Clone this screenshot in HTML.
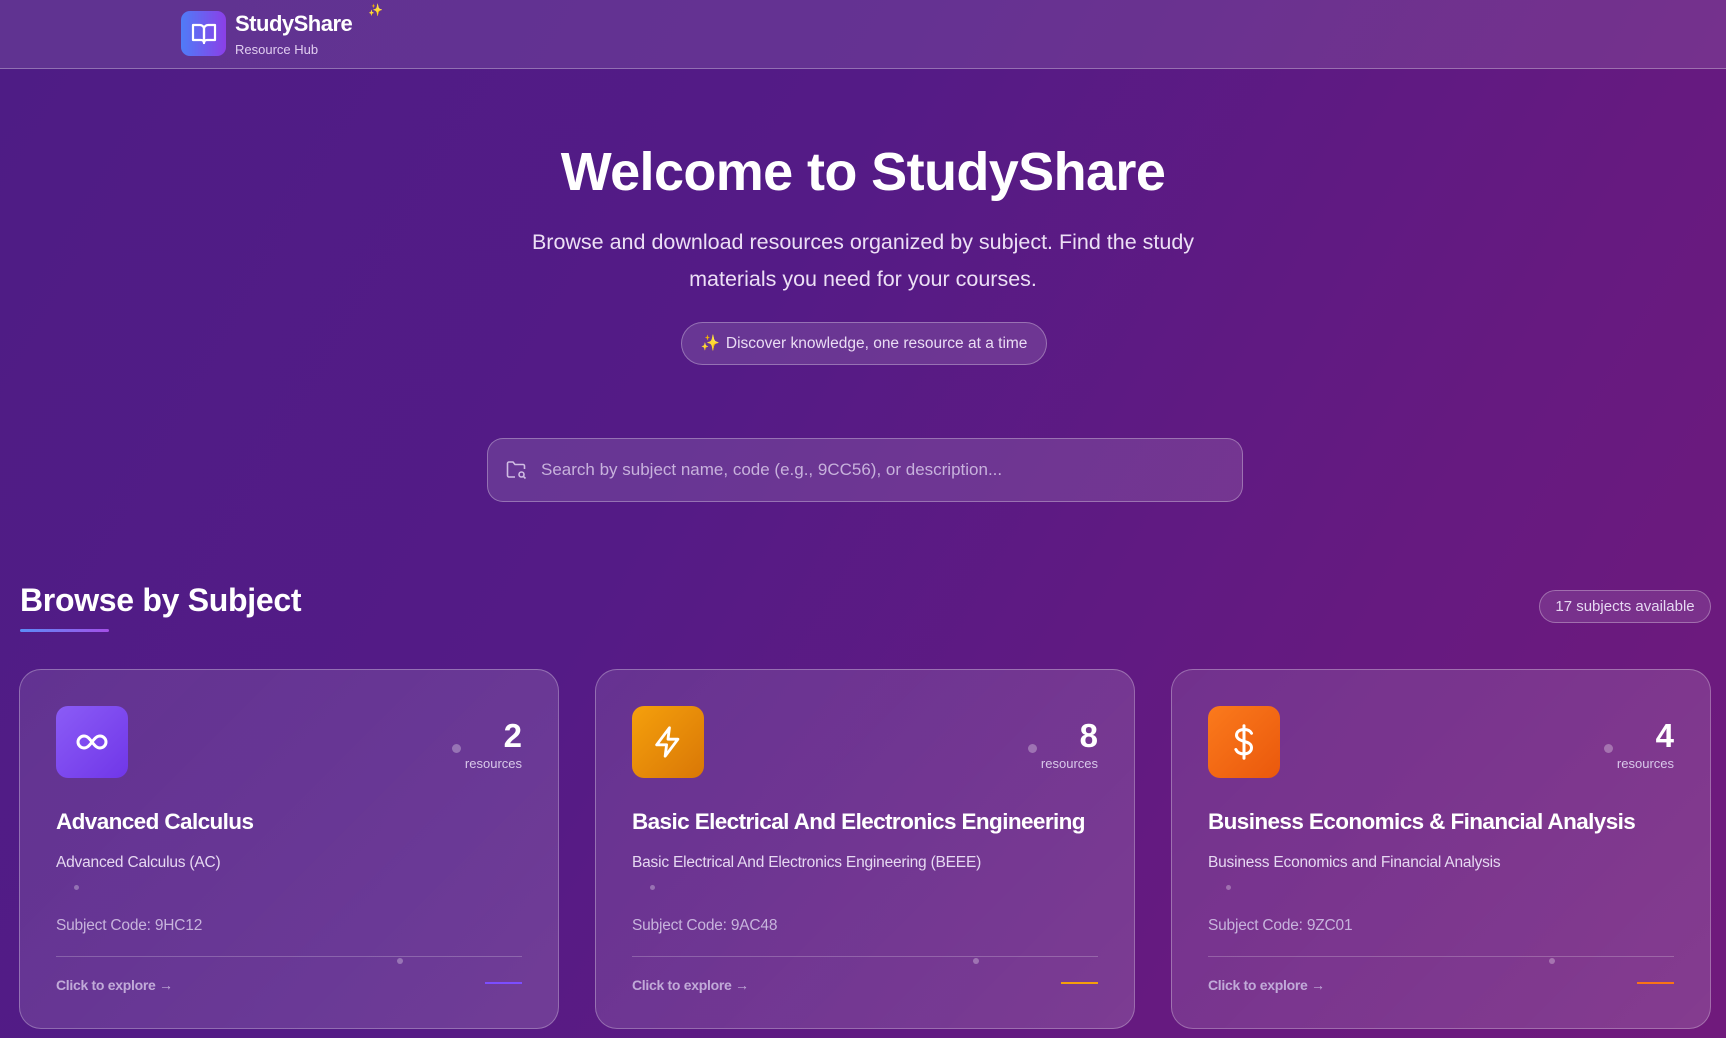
<!DOCTYPE html>
<html><head><meta charset="utf-8"><style>
*{margin:0;padding:0;box-sizing:border-box}
html,body{width:1726px;height:1038px;overflow:hidden}
body{font-family:"Liberation Sans",sans-serif;color:#fff;background:linear-gradient(120deg,#4e1c85 0%,#541b86 40%,#661a80 75%,#701a7c 100%);position:relative}
.hdr{position:absolute;left:0;top:0;width:1726px;height:69px;background:rgba(255,255,255,0.1);border-bottom:1px solid rgba(255,255,255,0.3)}
.logo{position:absolute;left:181px;top:11px;width:45px;height:45px;border-radius:9px;background:linear-gradient(90deg,#4f7cf7,#8b3fe8);display:flex;align-items:center;justify-content:center}
.brand{position:absolute;left:235px;top:11px;font-weight:bold;font-size:22px;letter-spacing:-0.5px}
.sub{position:absolute;left:235px;top:42px;font-size:13px;color:#e0cdf0}
.spark{position:absolute;left:368px;top:3px;color:#d4a05a;font-size:12px}
h1{position:absolute;top:141px;width:100%;text-align:center;font-size:54px;font-weight:bold;letter-spacing:-0.6px}
.lead{position:absolute;top:224px;width:100%;text-align:center;font-size:21.5px;line-height:37px;color:#ecdff5}
.pill{position:absolute;left:681px;top:322px;width:366px;height:43px;border-radius:22px;background:rgba(255,255,255,0.12);border:1px solid rgba(255,255,255,0.3);font-size:15.5px;color:#eadcf4;display:flex;align-items:center;justify-content:center;gap:6px}
.search{position:absolute;left:487px;top:438px;width:756px;height:64px;border-radius:16px;background:rgba(255,255,255,0.12);border:1px solid rgba(255,255,255,0.3);display:flex;align-items:center;padding-left:18px;font-size:17px;color:#c7b1dc}
.search svg{margin-right:13px}
h2{position:absolute;left:20px;top:582px;font-size:32px;font-weight:bold;letter-spacing:-0.3px}
.ul{position:absolute;left:20px;top:629px;width:89px;height:3px;border-radius:2px;background:linear-gradient(90deg,#5b8df7,#a44fe8)}
.badge{position:absolute;left:1539px;top:590px;width:172px;height:33px;border-radius:17px;background:rgba(255,255,255,0.1);border:1px solid rgba(255,255,255,0.3);font-size:15px;color:#e6d8f2;display:flex;align-items:center;justify-content:center}
.card{position:absolute;top:669px;width:540px;height:360px;border-radius:22px;background:linear-gradient(135deg,rgba(255,255,255,0.1),rgba(255,255,255,0.15));border:1px solid rgba(255,255,255,0.28)}
.ic{position:absolute;left:36px;top:36px;width:72px;height:72px;border-radius:12px;display:flex;align-items:center;justify-content:center}
.num{position:absolute;right:36px;top:47px;font-size:33px;font-weight:bold}
.res{position:absolute;right:36px;top:86px;font-size:13px;color:#d9c8ea}
.dot{position:absolute;border-radius:50%;background:rgba(255,255,255,0.3)}
.t{position:absolute;left:36px;top:139px;font-size:22.5px;font-weight:bold;letter-spacing:-0.6px}
.d{position:absolute;left:36px;top:184px;font-size:15.5px;color:#e6d8f2;letter-spacing:-0.2px}
.c{position:absolute;left:36px;top:247px;font-size:15.5px;color:#c7b3dc;letter-spacing:-0.2px}
.hr{position:absolute;left:36px;right:36px;top:286px;height:1px;background:rgba(255,255,255,0.22)}
.ex{position:absolute;left:36px;top:307px;font-size:14px;font-weight:bold;color:#c1aad8;letter-spacing:-0.3px}
.acc{position:absolute;right:36px;top:312px;width:37px;height:2px}
</style></head><body>
<div class="hdr">
<div class="logo"><svg width="26" height="24" viewBox="0 0 26 24" fill="none" stroke="#fff" stroke-width="2.2" stroke-linejoin="round"><path d="M2 3h7a4 4 0 0 1 4 4v14a3 3 0 0 0-3-3H2z"/><path d="M24 3h-7a4 4 0 0 0-4 4v14a3 3 0 0 1 3-3h8z"/></svg></div>
<div class="brand">StudyShare</div><div class="sub">Resource Hub</div><div class="spark">✨</div>
</div>
<h1>Welcome to StudyShare</h1>
<div class="lead">Browse and download resources organized by subject. Find the study<br>materials you need for your courses.</div>
<div class="pill"><span style="color:#e89a5a">✨</span>Discover knowledge, one resource at a time</div>
<div class="search"><svg width="22" height="20" viewBox="0 0 22 20" fill="none" stroke="#d0bde3" stroke-width="1.6"><path d="M9 17H3a1.5 1.5 0 0 1-1.5-1.5v-12A1.5 1.5 0 0 1 3 2h4l2 2.5h8A1.5 1.5 0 0 1 18.5 6v3"/><circle cx="15.5" cy="14.5" r="2.5"/><path d="M17.3 16.3 19.5 18.5"/></svg>Search by subject name, code (e.g., 9CC56), or description...</div>
<h2>Browse by Subject</h2><div class="ul"></div>
<div class="badge">17 subjects available</div>

<div class="card" style="left:19px">
<div class="ic" style="background:linear-gradient(135deg,#8b5cf6,#7036e8)"><svg width="34" height="18" viewBox="0 0 34 18" fill="none" stroke="#fff" stroke-width="3"><path d="M17 9c-3-4-5-6-8-6a6 6 0 0 0 0 12c3 0 5-2 8-6s5-6 8-6a6 6 0 0 1 0 12c-3 0-5-2-8-6z"/></svg></div>
<div class="dot" style="left:432px;top:74px;width:9px;height:9px"></div>
<div class="num">2</div><div class="res">resources</div>
<div class="t">Advanced Calculus</div><div class="d">Advanced Calculus (AC)</div>
<div class="dot" style="left:54px;top:215px;width:5px;height:5px"></div>
<div class="c">Subject Code: 9HC12</div><div class="hr"></div>
<div class="dot" style="left:377px;top:288px;width:6px;height:6px"></div>
<div class="ex">Click to explore →</div><div class="acc" style="background:#7c4dff"></div>
</div>

<div class="card" style="left:595px">
<div class="ic" style="background:linear-gradient(135deg,#f5a00c,#d97706)"><svg width="34" height="36" viewBox="0 0 24 24" fill="none" stroke="#fff" stroke-width="2" stroke-linejoin="round"><path d="M13 2 4 14h7l-1 8 9-12h-7z"/></svg></div>
<div class="dot" style="left:432px;top:74px;width:9px;height:9px"></div>
<div class="num">8</div><div class="res">resources</div>
<div class="t">Basic Electrical And Electronics Engineering</div><div class="d">Basic Electrical And Electronics Engineering (BEEE)</div>
<div class="dot" style="left:54px;top:215px;width:5px;height:5px"></div>
<div class="c">Subject Code: 9AC48</div><div class="hr"></div>
<div class="dot" style="left:377px;top:288px;width:6px;height:6px"></div>
<div class="ex">Click to explore →</div><div class="acc" style="background:#f59e0b"></div>
</div>

<div class="card" style="left:1171px">
<div class="ic" style="background:linear-gradient(135deg,#fb7a1c,#ea580c)"><svg width="30" height="38" viewBox="0 0 24 30" fill="none" stroke="#fff" stroke-width="2.4" stroke-linecap="round"><path d="M12 2v26"/><path d="M18 8c-1-2-3.5-3-6-3-3.5 0-6 1.8-6 4.5S8.5 13.5 12 14.5s6 2 6 5-2.5 5-6 5c-3 0-5.5-1.2-6.5-3.5"/></svg></div>
<div class="dot" style="left:432px;top:74px;width:9px;height:9px"></div>
<div class="num">4</div><div class="res">resources</div>
<div class="t">Business Economics &amp; Financial Analysis</div><div class="d">Business Economics and Financial Analysis</div>
<div class="dot" style="left:54px;top:215px;width:5px;height:5px"></div>
<div class="c">Subject Code: 9ZC01</div><div class="hr"></div>
<div class="dot" style="left:377px;top:288px;width:6px;height:6px"></div>
<div class="ex">Click to explore →</div><div class="acc" style="background:#f97316"></div>
</div>
</body></html>
